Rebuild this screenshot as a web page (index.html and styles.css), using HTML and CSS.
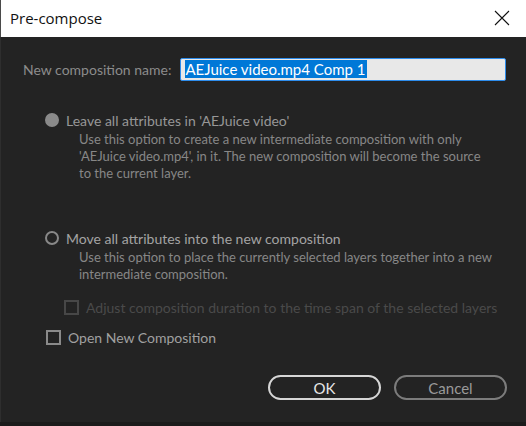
FILE: index.html
```html
<!DOCTYPE html>
<html lang="en">
<head>
    <meta charset="UTF-8">
    <meta name="viewport" content="width=device-width, initial-scale=1.0">
    <title>Pre-compose</title>
    <link rel="stylesheet" href="styles.css">
</head>
<body>
    <div class="dialog">
        <div class="title-bar">
            <span class="title">Pre-compose</span>
            <svg class="close" width="16" height="16" viewBox="0 0 16 16">
                <path d="M1 1 L15 15 M15 1 L1 15" stroke="#111" stroke-width="1.1" fill="none"/>
            </svg>
        </div>

        <div class="content">
            <div class="name-row">
                <label class="name-label">New composition name:</label>
                <div class="name-input"><span class="selected">AEJuice video.mp4 Comp 1</span></div>
            </div>

            <div class="option first">
                <div class="option-head">
                    <span class="radio filled"></span>
                    <span class="option-label">Leave all attributes in 'AEJuice video'</span>
                </div>
                <p class="option-desc">Use this option to create a new intermediate composition with only<br>'AEJuice video.mp4', in it. The new composition will become the source<br>to the current layer.</p>
            </div>

            <div class="option second">
                <div class="option-head">
                    <span class="radio"></span>
                    <span class="option-label">Move all attributes into the new composition</span>
                </div>
                <p class="option-desc">Use this option to place the currently selected layers together into a new<br>intermediate composition.</p>
            </div>

            <div class="check disabled">
                <span class="box"></span>
                <span>Adjust composition duration to the time span of the selected layers</span>
            </div>

            <div class="check open">
                <span class="box"></span>
                <span>Open New Composition</span>
            </div>

            <div class="buttons">
                <button class="btn ok">OK</button>
                <button class="btn cancel">Cancel</button>
            </div>
        </div>
        <div class="bottom-edge"></div>
    </div>
</body>
</html>
```

FILE: styles.css
```css
body {
    margin: 0;
    background-color: #232323;
    font-family: Lato, "Noto Sans", sans-serif;
}
.dialog {
    width: 526px;
    height: 426px;
    display: flex;
    flex-direction: column;
}
.title-bar {
    height: 37px;
    background-color: #fff;
    border-left: 1px solid #4a4a4a;
    display: flex;
    align-items: center;
    justify-content: space-between;
    padding: 0 16px 0 9px;
    box-sizing: border-box;
}
.title {
    font-family: "Open Sans", "Noto Sans", sans-serif;
    font-size: 15px;
    color: #111;
    margin-top: -1px;
}
.close {
    margin-top: -1px;
}
.content {
    flex: 1;
    background-color: #232323;
    border-left: 1px solid #2e2e2e;
    padding: 21px 19px 0 22px;
    display: flex;
    flex-direction: column;
}
.bottom-edge {
    height: 4px;
    background-color: #1b1b1b;
}
.name-row {
    display: flex;
    align-items: center;
    gap: 9px;
}
.name-label {
    font-size: 14px;
    color: #8c8c8c;
}
.name-input {
    width: 326px;
    height: 23px;
    box-sizing: border-box;
    background-color: #e8e8e8;
    border: 1px solid #2d8ceb;
    border-radius: 2px;
    padding: 1px 4px;
    font-size: 15px;
    line-height: 19px;
}
.selected {
    background-color: #0078d7;
    color: #fff;
    padding-right: 2px;
}
.option {
    display: flex;
    flex-direction: column;
    margin-left: 22px;
}
.option.first {
    margin-top: 31px;
}
.option.second {
    margin-top: 48px;
}
.option-head {
    display: flex;
    align-items: center;
    gap: 7px;
    height: 16px;
    font-size: 14px;
    color: #979797;
}
.option.second .option-head {
    color: #a3a3a3;
}
.radio {
    width: 14px;
    height: 14px;
    box-sizing: border-box;
    border: 2px solid #888;
    border-radius: 50%;
}
.radio.filled {
    background-color: #8a8a8a;
    border-color: #8a8a8a;
}
.option-desc {
    margin: 3px 0 0 34px;
    font-size: 13px;
    line-height: 17px;
    color: #878787;
}
.check {
    display: flex;
    align-items: center;
    gap: 7px;
    font-size: 14px;
    height: 16px;
}
.check .box {
    width: 15px;
    height: 15px;
    box-sizing: border-box;
    border: 2px solid #8a8a8a;
}
.check.disabled {
    margin: 16px 0 0 41px;
    color: #4a4a4a;
}
.check.disabled .box {
    border-color: #474747;
}
.check.open {
    margin: 14px 0 0 23px;
    color: #a0a0a0;
}
.buttons {
    display: flex;
    justify-content: flex-end;
    gap: 13px;
    margin-top: 30px;
}
.btn {
    width: 113px;
    height: 25px;
    border-radius: 13px;
    background: transparent;
    font-family: Lato, "Noto Sans", sans-serif;
    font-size: 15px;
    padding: 0;
    cursor: pointer;
}
.btn.ok {
    border: 2px solid #d6d6d6;
    color: #e6e6e6;
}
.btn.cancel {
    border: 2px solid #7c7c7c;
    color: #9a9a9a;
}
```
